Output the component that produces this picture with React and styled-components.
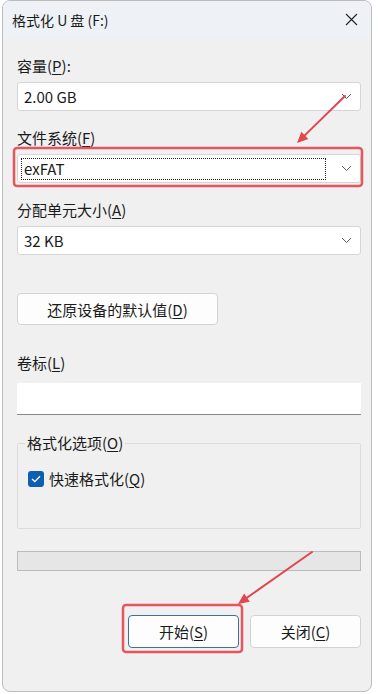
import React from 'react'
import styled, { createGlobalStyle } from 'styled-components'

const GlobalStyle = createGlobalStyle`
  html, body {
    margin: 0;
    padding: 0;
    background: #ffffff;
  }
  body {
    font-family: "Noto Sans CJK SC", "Noto Sans", sans-serif;
    color: #1b1b1b;
  }
`;

const Page = styled.div`
  position: relative;
  width: 378px;
  height: 694px;
  overflow: hidden;
`;

const Window = styled.div`
  margin-left: 2px;
  width: 370px;
  height: 692px;
  box-sizing: border-box;
  border: 1px solid #bdbdbd;
  border-radius: 8px;
  overflow: hidden;
  display: flex;
  flex-direction: column;
  background: #f0f0f0;
`;

const TitleBar = styled.div`
  height: 37px;
  display: flex;
  align-items: center;
  justify-content: space-between;
  padding: 0 10px 0 9px;
  background: #eef2f7;
  font-size: 14px;
`;

const Close = styled.div`
  width: 16px;
  height: 16px;
  display: flex;
  align-items: center;
  justify-content: center;
  margin-right: 2px;
`;

const Body = styled.div`
  flex: 1;
  display: flex;
  flex-direction: column;
  padding: 18px 10px 0 14px;
  font-size: 15px;
`;

const Label = styled.div`
  height: 20px;
  line-height: 20px;
  margin-top: ${p => p.$top || 0}px;
  margin-bottom: ${p => p.$bottom || 6}px;
  u { text-decoration: underline; text-underline-offset: 2px; }
`;

const Select = styled.div`
  height: 29px;
  box-sizing: border-box;
  background: #ffffff;
  border: 1px solid #d5d5d5;
  border-radius: 3px;
  display: flex;
  align-items: center;
  justify-content: space-between;
  padding: 0 8px 0 4px;
`;

const SelectText = styled.span`
  padding: 0 2px;
  line-height: 20px;
  ${p => p.$focused && `
    flex: 1;
    margin-right: 16px;
    outline: 1px dotted #222;
    outline-offset: 0px;
  `}
`;

const Button = styled.div`
  width: ${p => p.$w}px;
  height: ${p => p.$h || 33}px;
  box-sizing: border-box;
  background: #fdfdfd;
  border: 1px solid ${p => p.$primary ? '#3f6f9c' : '#d3d3d3'};
  border-radius: 4px;
  display: flex;
  align-items: center;
  justify-content: center;
  margin-top: ${p => p.$top || 0}px;
  u { text-decoration: underline; text-underline-offset: 2px; }
`;

const TextInput = styled.div`
  height: 32px;
  box-sizing: border-box;
  background: #ffffff;
  border-bottom: 1px solid #8a8a8a;
`;

const Group = styled.fieldset`
  margin: 18px 0 0 0;
  height: 96px;
  box-sizing: border-box;
  border: 1px solid #dcdcdc;
  border-radius: 2px;
  padding: 0 10px;
  min-width: 0;
`;

const Legend = styled.legend`
  line-height: 20px;
  padding: 0 2px;
  margin-left: -3px;
  u { text-decoration: underline; text-underline-offset: 2px; }
`;

const CheckRow = styled.div`
  display: flex;
  align-items: center;
  gap: 5px;
  margin-top: 15px;
  u { text-decoration: underline; text-underline-offset: 2px; }
`;

const Box = styled.div`
  width: 16px;
  height: 16px;
  border-radius: 3px;
  background: #0f5fb0;
  display: flex;
  align-items: center;
  justify-content: center;
`;

const Progress = styled.div`
  margin-top: 22px;
  height: 20px;
  box-sizing: border-box;
  background: #e6e6e6;
  border: 1px solid #bcbcbc;
`;

const Actions = styled.div`
  margin-top: 44px;
  display: flex;
  justify-content: flex-end;
  gap: 11px;
`;

const Overlay = styled.svg`
  position: absolute;
  left: 0;
  top: 0;
  pointer-events: none;
`;

const Chevron = () => (
  <svg width="11" height="7" viewBox="0 0 11 7">
    <path d="M1 1 L5.5 5.5 L10 1" fill="none" stroke="#5a5a5a" strokeWidth="1" />
  </svg>
);

const arrowHead = (x1, y1, x2, y2, len = 11, w = 5) => {
  const dx = x2 - x1, dy = y2 - y1;
  const d = Math.hypot(dx, dy);
  const ux = dx / d, uy = dy / d;
  const bx = x2 - ux * len, by = y2 - uy * len;
  return `${x2},${y2} ${bx - uy * w},${by + ux * w} ${bx + uy * w},${by - ux * w}`;
};

const RED = '#e2464e';

const Arrow = ({ x1, y1, x2, y2 }) => {
  const d = Math.hypot(x2 - x1, y2 - y1);
  const ex = x2 - (x2 - x1) / d * 8, ey = y2 - (y2 - y1) / d * 8;
  return (
    <g>
      <line x1={x1} y1={y1} x2={ex} y2={ey} stroke={RED} strokeWidth="2" strokeLinecap="round" />
      <polygon points={arrowHead(x1, y1, x2, y2)} fill={RED} />
    </g>
  );
};

const App = () => {
  return (
    <Page>
      <GlobalStyle />
      <Window>
        <TitleBar>
          <span>格式化 U 盘 (F:)</span>
          <Close>
            <svg width="13" height="13" viewBox="0 0 13 13">
              <path d="M1 1 L12 12 M12 1 L1 12" stroke="#222" strokeWidth="1.1" />
            </svg>
          </Close>
        </TitleBar>
        <Body>
          <Label>容量(<u>P</u>):</Label>
          <Select>
            <SelectText>2.00 GB</SelectText>
            <Chevron />
          </Select>

          <Label $top={17}>文件系统(<u>F</u>)</Label>
          <Select>
            <SelectText $focused>exFAT</SelectText>
            <Chevron />
          </Select>

          <Label $top={17}>分配单元大小(<u>A</u>)</Label>
          <Select>
            <SelectText>32 KB</SelectText>
            <Chevron />
          </Select>

          <Button $w={201} $h={32} $top={38}>还原设备的默认值(<u>D</u>)</Button>

          <Label $top={28} $bottom={10}>卷标(<u>L</u>)</Label>
          <TextInput />

          <Group>
            <Legend>格式化选项(<u>O</u>)</Legend>
            <CheckRow>
              <Box>
                <svg width="10" height="8" viewBox="0 0 10 8">
                  <path d="M1 4 L3.8 6.6 L9 1.2" fill="none" stroke="#fff" strokeWidth="1.3" />
                </svg>
              </Box>
              <span>快速格式化(<u>Q</u>)</span>
            </CheckRow>
          </Group>

          <Progress />

          <Actions>
            <Button $w={111} $primary>开始(<u>S</u>)</Button>
            <Button $w={111}>关闭(<u>C</u>)</Button>
          </Actions>
        </Body>
      </Window>
      <Overlay width="378" height="694" viewBox="0 0 378 694">
        <rect x="14" y="148" width="348" height="38" rx="3" fill="none" stroke={RED} strokeWidth="2.5" opacity="0.9" />
        <rect x="123" y="605" width="119" height="47" rx="3" fill="none" stroke={RED} strokeWidth="2.5" opacity="0.9" />
        <Arrow x1={345} y1={96} x2={297} y2={143} />
        <Arrow x1={312} y1={552} x2={238} y2={604} />
      </Overlay>
    </Page>
  )
}

export default App
